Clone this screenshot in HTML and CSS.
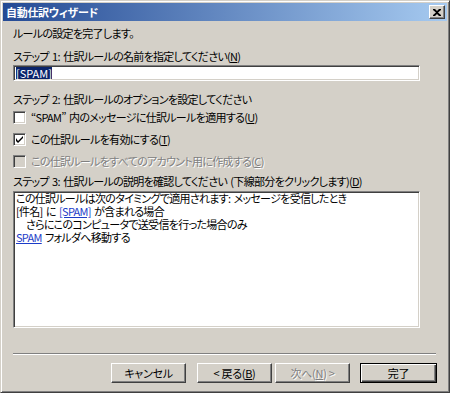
FILE: index.html
```html
<!DOCTYPE html>
<html lang="ja">
<head>
  <meta charset="UTF-8" />
  <title>自動仕訳ウィザード</title>
  <link rel="stylesheet" href="styles.css">
</head>
<body>

  <div class="window">
    <div class="titlebar">
      <span class="title">自動仕訳ウィザード</span>
      <div class="close-btn">
        <svg width="8" height="7" viewBox="0 0 8 7">
          <path d="M0 0h2l2 2 2-2h2v1l-3 2.5 3 2.5v1h-2l-2-2-2 2h-2v-1l3-2.5-3-2.5z" fill="#000"/>
        </svg>
      </div>
    </div>

    <div class="content">
      <p class="intro">ルールの設定を完了します。</p>

      <p class="step step1">ステップ 1: 仕訳ルールの名前を指定してください(<u>N</u>)</p>
      <div class="field name-field"><span class="selected">[SPAM]</span></div>

      <p class="step step2">ステップ 2: 仕訳ルールのオプションを設定してください</p>
      <div class="check">
        <span class="box"></span>
        <span>“SPAM” 内のメッセージに仕訳ルールを適用する(<u>U</u>)</span>
      </div>
      <div class="check">
        <span class="box">
          <svg width="7" height="7" viewBox="0 0 7 7">
            <path d="M0 2v3l2 2 5-5v-2l-5 5z" fill="#000"/>
          </svg>
        </span>
        <span>この仕訳ルールを有効にする(<u>T</u>)</span>
      </div>
      <div class="check disabled">
        <span class="box"></span>
        <span>この仕訳ルールをすべてのアカウント用に作成する(<u>C</u>)</span>
      </div>

      <p class="step step3">ステップ 3: 仕訳ルールの説明を確認してください (下線部分をクリックします)(<u>D</u>)</p>
      <div class="field desc">
        <div class="desc-line">この仕訳ルールは次のタイミングで適用されます: メッセージを受信したとき</div>
        <div class="desc-line">[件名] に <a class="link">[SPAM]</a> が含まれる場合</div>
        <div class="desc-line indent">さらにこのコンピュータで送受信を行った場合のみ</div>
        <div class="desc-line"><a class="link">SPAM</a> フォルダへ移動する</div>
      </div>

      <div class="separator"></div>

      <div class="buttons">
        <button class="btn cancel-btn">キャンセル</button>
        <button class="btn back-btn">&lt; 戻る(<u>B</u>)</button>
        <button class="btn next-btn" disabled>次へ(<u>N</u>) &gt;</button>
        <button class="btn finish-btn">完了</button>
      </div>
    </div>
  </div>

</body>
</html>
```

FILE: styles.css
```css
* {
  margin: 0;
  padding: 0;
  box-sizing: border-box;
}

body {
  background: #d4d0c8;
  font-family: "Noto Sans CJK JP", "Liberation Sans", sans-serif;
  font-size: 11px;
  letter-spacing: -0.7px;
  word-spacing: 1.5px;
  font-feature-settings: "palt";
  color: #000;
}

.window {
  width: 450px;
  height: 393px;
  padding: 2px;
  background: #d4d0c8;
  border: 1px solid;
  border-color: #d4d0c8 #404040 #404040 #d4d0c8;
  box-shadow: inset 1px 1px #fff, inset -1px -1px #808080;
  display: flex;
  flex-direction: column;
}

.titlebar {
  height: 18px;
  display: flex;
  align-items: center;
  justify-content: space-between;
  padding: 0 2px 0 3px;
  background: linear-gradient(to right, #244a94, #a6caf0);
}

.title {
  color: #fff;
  font-weight: bold;
  line-height: 18px;
  letter-spacing: -0.3px;
}

.close-btn {
  width: 16px;
  height: 14px;
  display: flex;
  align-items: center;
  justify-content: center;
  background: #d4d0c8;
  border: 1px solid;
  border-color: #fff #404040 #404040 #fff;
  box-shadow: inset -1px -1px #808080;
}

.content {
  flex: 1;
  display: flex;
  flex-direction: column;
  padding: 0 10px;
}

.intro {
  margin-top: 5px;
  line-height: 14px;
}

.step {
  line-height: 14px;
}

.step1 {
  margin-top: 9px;
}

.step2 {
  margin-top: 11px;
}

.step3 {
  margin-top: 2px;
}

u {
  text-decoration: underline;
}

.field {
  background: #fff;
  border: 1px solid;
  border-color: #808080 #fff #fff #808080;
  box-shadow: inset 1px 1px #404040, inset -1px -1px #d4d0c8;
}

.name-field {
  width: 407px;
  height: 16px;
  margin-top: 2px;
  padding: 2px 2px;
  display: flex;
  align-items: center;
}

.selected {
  background: #0a246a;
  color: #fff;
  line-height: 12px;
  letter-spacing: 0;
}

.check {
  height: 22px;
  display: flex;
  align-items: center;
  gap: 5px;
}

.box {
  width: 13px;
  height: 13px;
  flex-shrink: 0;
  display: flex;
  align-items: center;
  justify-content: center;
  background: #fff;
  border: 1px solid;
  border-color: #808080 #fff #fff #808080;
  box-shadow: inset 1px 1px #404040, inset -1px -1px #d4d0c8;
}

.check.disabled {
  color: #808080;
  text-shadow: 1px 1px #fff;
}

.check.disabled .box {
  background: #d4d0c8;
}

.desc {
  width: 407px;
  height: 137px;
  margin-top: 3px;
  padding: 0 2px;
}

.desc-line {
  height: 13px;
  line-height: 13px;
  white-space: nowrap;
}

.indent {
  padding-left: 10px;
}

.link {
  display: inline-block;
  line-height: 13px;
  color: #1c3cc8;
  text-decoration: underline;
}

.separator {
  margin-top: 25px;
  height: 2px;
  border-top: 1px solid #808080;
  border-bottom: 1px solid #fff;
  margin-right: 1px;
}

.buttons {
  margin-top: 8px;
  display: flex;
  justify-content: flex-end;
}

.btn {
  width: 75px;
  height: 20px;
  font: inherit;
  letter-spacing: -0.3px;
  color: #000;
  background: #d4d0c8;
  border: 1px solid;
  border-color: #fff #404040 #404040 #fff;
  box-shadow: inset -1px -1px #808080;
}

.back-btn {
  margin-left: 11px;
}

.next-btn {
  margin-left: 3px;
}

.next-btn:disabled {
  color: #808080;
  text-shadow: 1px 1px #fff;
}

.finish-btn {
  width: 77px;
  margin-left: 10px;
  border-color: #000;
  box-shadow: inset 1px 1px #fff, inset -1px -1px #404040, inset -2px -2px #808080;
}
```
